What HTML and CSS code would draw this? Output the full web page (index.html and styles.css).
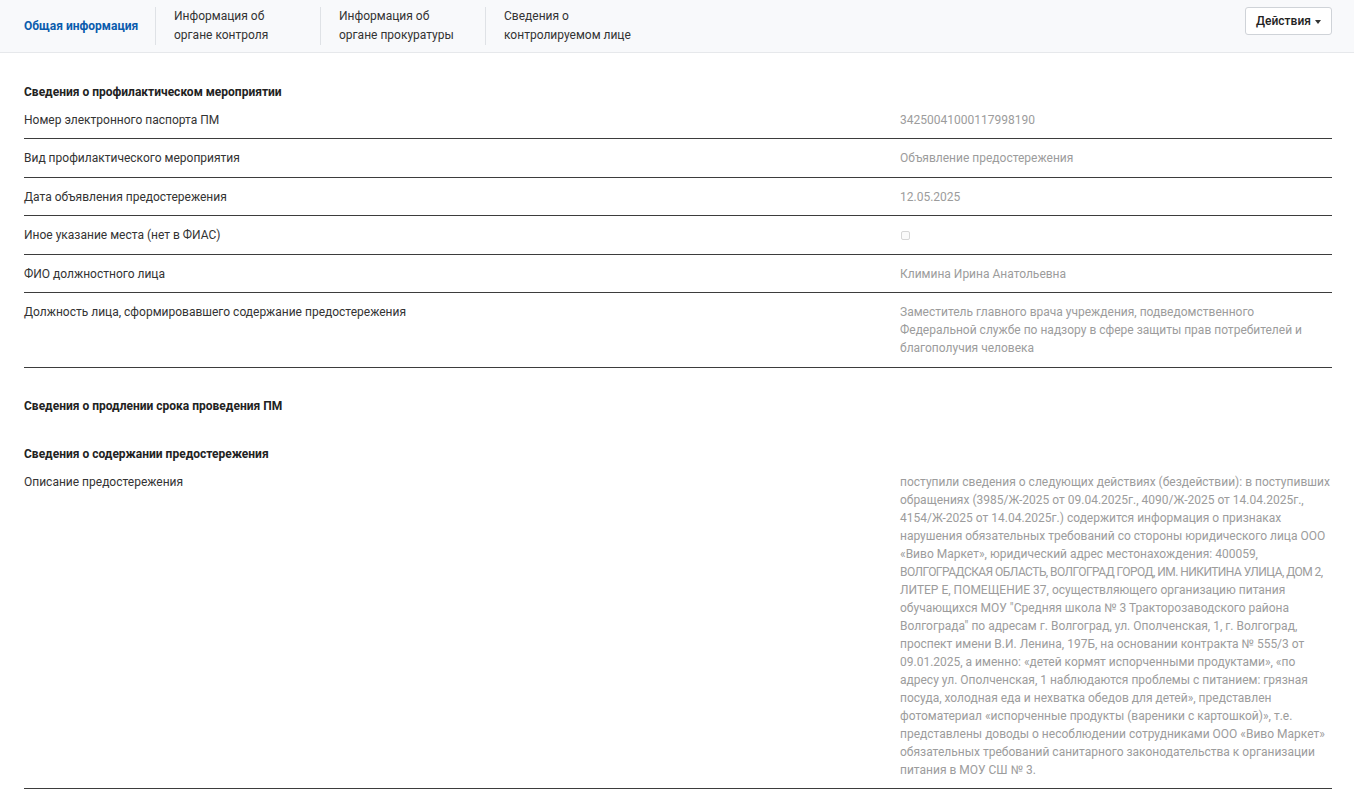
FILE: index.html
```html
<!DOCTYPE html>
<html lang="ru">
<head>
<meta charset="utf-8">
<title>Общая информация</title>
<link rel="stylesheet" href="styles.css">
</head>
<body>
<header class="topbar">
  <nav class="tabs">
    <a class="tab tab-active">Общая информация</a>
    <a class="tab">Информация об<br>органе контроля</a>
    <a class="tab">Информация об<br>органе прокуратуры</a>
    <a class="tab">Сведения о<br>контролируемом лице</a>
  </nav>
  <button class="actions">Действия <span class="caret"></span></button>
</header>

<main class="content">
  <section class="section">
    <h2 class="section-title">Сведения о профилактическом мероприятии</h2>
    <div class="row"><div class="label">Номер электронного паспорта ПМ</div><div class="value">34250041000117998190</div></div>
    <div class="row"><div class="label">Вид профилактического мероприятия</div><div class="value">Объявление предостережения</div></div>
    <div class="row"><div class="label">Дата объявления предостережения</div><div class="value">12.05.2025</div></div>
    <div class="row"><div class="label">Иное указание места (нет в ФИАС)</div><div class="value"><span class="checkbox"></span></div></div>
    <div class="row"><div class="label">ФИО должностного лица</div><div class="value">Климина Ирина Анатольевна</div></div>
    <div class="row"><div class="label">Должность лица, сформировавшего содержание предостережения</div><div class="value">Заместитель главного врача учреждения, подведомственного<br>Федеральной службе по надзору в сфере защиты прав потребителей и<br>благополучия человека</div></div>
  </section>

  <section class="section">
    <h2 class="section-title">Сведения о продлении срока проведения ПМ</h2>
  </section>

  <section class="section">
    <h2 class="section-title">Сведения о содержании предостережения</h2>
    <div class="row"><div class="label">Описание предостережения</div><div class="value">поступили сведения о следующих действиях (бездействии): в поступивших<br>обращениях (3985/Ж-2025 от 09.04.2025г., 4090/Ж-2025 от 14.04.2025г.,<br>4154/Ж-2025 от 14.04.2025г.) содержится информация о признаках<br>нарушения обязательных требований со стороны юридического лица ООО<br>«Виво Маркет», юридический адрес местонахождения: 400059,<br><span class="tight">ВОЛГОГРАДСКАЯ ОБЛАСТЬ, ВОЛГОГРАД ГОРОД, ИМ. НИКИТИНА УЛИЦА, ДОМ 2,</span><br>ЛИТЕР Е, ПОМЕЩЕНИЕ 37, осуществляющего организацию питания<br>обучающихся МОУ "Средняя школа № 3 Тракторозаводского района<br>Волгограда" по адресам г. Волгоград, ул. Ополченская, 1, г. Волгоград,<br>проспект имени В.И. Ленина, 197Б, на основании контракта № 555/3 от<br>09.01.2025, а именно: «детей кормят испорченными продуктами», «по<br>адресу ул. Ополченская, 1 наблюдаются проблемы с питанием: грязная<br>посуда, холодная еда и нехватка обедов для детей», представлен<br>фотоматериал «испорченные продукты (вареники с картошкой)», т.е.<br>представлены доводы о несоблюдении сотрудниками ООО «Виво Маркет»<br>обязательных требований санитарного законодательства к организации<br>питания в МОУ СШ № 3.</div></div>
  </section>
</main>
</body>
</html>
```
FILE: styles.css
```css
* { box-sizing: border-box; }
html, body { margin: 0; padding: 0; }
body {
  font-family: Roboto, "Liberation Sans", sans-serif;
  font-size: 12px;
  line-height: 18px;
  color: #333;
  background: #fff;
}

.topbar {
  height: 53px;
  background: #f8f9fb;
  border-bottom: 1px solid #e6e8eb;
  display: flex;
  align-items: flex-start;
  justify-content: space-between;
  padding: 0 22px 0 24px;
}
.tabs {
  display: flex;
  align-items: center;
  height: 52px;
}
.tab {
  display: flex;
  align-items: center;
  height: 38px;
  width: 165px;
  padding: 0 18px;
  border-left: 1px solid #dfe2e6;
  color: #333;
  line-height: 19px;
  white-space: nowrap;
  font-size: 12px;
}
.tab:first-child { border-left: none; padding: 0; width: 131px; }
.tab:last-child { width: auto; }
.tab-active {
  color: #0b5cad;
  font-weight: 700;
}

.actions {
  margin-top: 7px;
  height: 28px;
  width: 87px;
  padding: 0 10px;
  border: 1px solid #cfd3d8;
  border-radius: 3px;
  background: #fff;
  font-family: inherit;
  font-size: 12px;
  font-weight: 500;
  color: #222;
  display: flex;
  align-items: center;
  justify-content: center;
  gap: 4px;
}
.caret {
  display: inline-block;
  width: 0; height: 0;
  border-left: 3.5px solid transparent;
  border-right: 3.5px solid transparent;
  border-top: 4px solid #333;
  margin-top: 1px;
}

.content {
  padding: 0 22px 0 24px;
}
.section { margin-top: 29.5px; }
.section-title {
  margin: 0;
  font-size: 12px;
  line-height: 18px;
  font-weight: 700;
  color: #222;
}
.row {
  display: grid;
  grid-template-columns: 876px 1fr;
  padding: 10px 0 9.5px;
  border-bottom: 1px solid #3d3d3d;
}
.label { color: #333; }
.value { color: #9c9c9c; white-space: nowrap; }
.tight { letter-spacing: -0.55px; }
.checkbox {
  display: inline-block;
  width: 9px;
  height: 9px;
  margin-left: 1px;
  border: 1px solid #d6d6d6;
  border-radius: 2px;
  background: #fafafa;
  vertical-align: -1px;
}
```
